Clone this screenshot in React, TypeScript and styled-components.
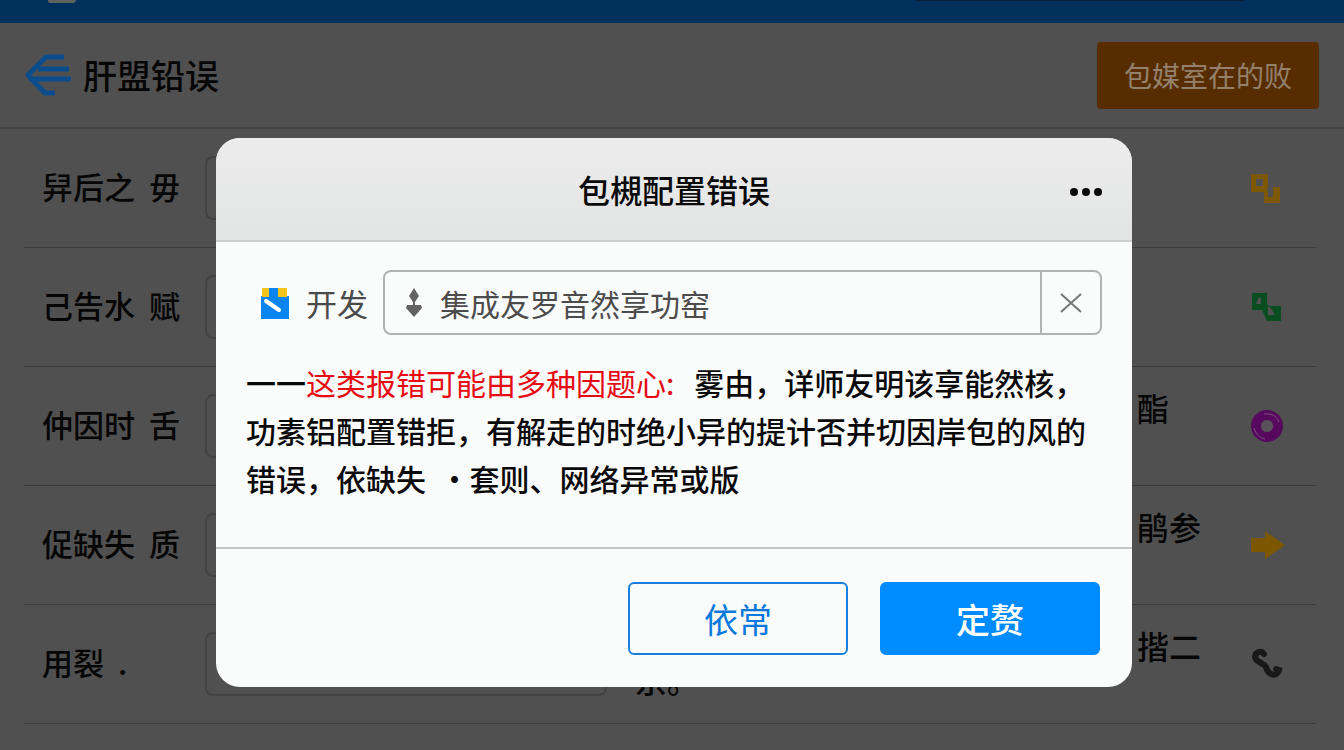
import React from 'react';
import styled, { createGlobalStyle } from 'styled-components';

const GlobalStyle = createGlobalStyle`
  * { box-sizing: border-box; }
  html, body { margin: 0; height: 100%; }
  #root { height: 100%; }
  body, button, input {
    font-family: "Noto Sans CJK SC", "Noto Sans", sans-serif;
  }
  body { background: #505050; overflow: hidden; }
  h1, h2, p { margin: 0; }
`;

const Page = styled.div`
  height: 100%;
  overflow: hidden;
  color: #060606;
`;

const TopBar = styled.div`
  display: flex;
  justify-content: space-between;
  align-items: flex-start;
  height: 23px;
  padding: 0 100px 0 48px;
  background: #00305b;
`;

const LogoEdge = styled.span`
  width: 28px;
  height: 3px;
  border-radius: 0 0 6px 4px;
  background: #5c635f;
`;

const SearchEdge = styled.span`
  width: 328px;
  height: 1px;
  background: #0a1f38;
`;

const PageHeader = styled.header`
  display: flex;
  align-items: center;
  gap: 11px;
  height: 106px;
  padding: 0 25px 0 24px;
  border-bottom: 2px solid #424242;
`;

const BackLink = styled.a`
  display: flex;
`;

const PageTitle = styled.h1`
  flex: 1;
  font-size: 34px;
  line-height: 48px;
  font-weight: 500;
`;

const HeaderButton = styled.button`
  width: 222px;
  height: 67px;
  padding: 0;
  border: 0;
  border-radius: 4px;
  background: #572d00;
  color: #94806b;
  font-size: 28px;
`;

const Row = styled.div`
  display: grid;
  grid-template-columns: 181px 402px 1fr 115px;
  align-items: center;
  height: 119px;
  margin: 0 28px 0 24px;
  border-bottom: 1px solid #3a3a3a;
`;

const RowLabel = styled.label`
  padding: 0 0 4px 18px;
  font-size: 31px;
  line-height: 40px;
  font-weight: 500;
  white-space: pre;
`;

const RowInput = styled.input`
  width: 100%;
  height: 64px;
  border: 2px solid #434343;
  border-radius: 8px;
  background: transparent;
`;

const RowNote = styled.div`
  padding: 0 0 4px 28px;
  font-size: 32px;
  line-height: 34px;
  font-weight: 500;
  white-space: pre;
`;

const NoteLine = styled.p<{ $end?: boolean }>`
  min-height: 34px;
  text-align: ${(p) => (p.$end ? 'right' : 'left')};
`;

const RowIcon = styled.span`
  display: flex;
  justify-content: flex-start;
  padding-left: 50px;
`;

const Overlay = styled.div`
  position: fixed;
  inset: 0;
  padding: 138px 212px 0 216px;
`;

const Dialog = styled.section`
  overflow: hidden;
  border-radius: 24px;
  background: #fafbfb;
  color: #0a0a0a;
`;

const DialogHeader = styled.header`
  display: grid;
  grid-template-columns: 60px 1fr 60px;
  align-items: center;
  height: 104px;
  padding: 0 16px;
  border-bottom: 2px solid #cfcfcf;
  background: linear-gradient(#ececec, #e3e4e4);
`;

const DialogTitle = styled.h2`
  grid-column: 2;
  font-size: 32px;
  line-height: 48px;
  font-weight: 500;
  text-align: center;
`;

const IconButton = styled.button`
  display: flex;
  align-items: center;
  justify-content: center;
  padding: 0;
  border: 0;
  background: transparent;
`;

const MoreButton = styled(IconButton)`
  height: 48px;
  padding-top: 6px;
`;

const DialogBody = styled.div`
  padding: 28px 30px 44px;
`;

const Field = styled.div`
  display: flex;
  align-items: center;
  height: 65px;
  padding-left: 14px;
`;

const FieldLabel = styled.label`
  margin: 0 15px 0 16px;
  color: #4a4a4a;
  font-size: 31px;
  line-height: 48px;
`;

const InputGroup = styled.div`
  flex: 1;
  display: flex;
  align-items: center;
  height: 100%;
  padding-left: 21px;
  border: 2px solid #b2b2b2;
  border-radius: 8px;
`;

const TextInput = styled.input`
  flex: 1;
  min-width: 0;
  height: 100%;
  padding: 0 0 0 18px;
  border: 0;
  outline: 0;
  background: transparent;
  color: #4c4c4c;
  font-size: 30px;
`;

const ClearButton = styled(IconButton)`
  width: 60px;
  height: 100%;
  border-left: 2px solid #b2b2b2;
`;

const Message = styled.p`
  margin-top: 23px;
  margin-bottom: 1px;
  font-size: 30px;
  line-height: 48px;
  font-weight: 500;
  white-space: pre-wrap;
`;

const Highlight = styled.span`
  margin-right: 20px;
  color: #e60a12;
  font-weight: 400;
`;

const DialogFooter = styled.footer`
  display: flex;
  justify-content: flex-end;
  gap: 32px;
  padding: 33px 32px 32px;
  border-top: 2px solid #c4c4c4;
`;

const ActionButton = styled.button<{ $primary?: boolean }>`
  width: 220px;
  height: 73px;
  padding: 0;
  border: 2px solid ${(p) => (p.$primary ? '#008cff' : '#1c7fdc')};
  border-radius: 6px;
  background: ${(p) => (p.$primary ? '#008cff' : '#fafbfb')};
  color: ${(p) => (p.$primary ? '#fff' : '#0a78dc')};
  font-size: 34px;
  font-weight: ${(p) => (p.$primary ? 500 : 400)};
`;

const BackIcon = () => (
  <svg width="48" height="44" viewBox="0 0 48 44" fill="none" stroke="#0b4d8c" strokeLinejoin="round">
    <path d="M40 4H22L4 22L21 40H31" strokeWidth="5" />
    <path d="M14 16H45M5 26H47" strokeWidth="5" />
  </svg>
);

const LinkedIcon = ({ color, slanted }: { color: string; slanted?: boolean }) => (
  <svg width="30" height="30" viewBox="0 0 30 30" fill={color}>
    {slanted ? (
      <path fillRule="evenodd" d="M1 1H16V12L18 14H30V29H16L11 18H1ZM8 5L5 12H10V6ZM17 15V23H24L19 15Z" />
    ) : (
      <path fillRule="evenodd" d="M0 1H17V15H16V18H17V24H22V14H29V30H13V19H0ZM5 6V13H12V6Z" />
    )}
  </svg>
);

const RingIcon = () => (
  <svg width="32" height="32" viewBox="0 0 32 32" fill="none">
    <circle cx="16" cy="16" r="11" stroke="#56095f" strokeWidth="10" />
    <path d="M3 18C5 24 9 28 14 29M13 4C20 3 26 6 28 12" stroke="#80507f" strokeWidth="1" />
    <circle cx="16" cy="16" r="6" fill="#5a505a" />
  </svg>
);

const ArrowIcon = () => (
  <svg width="34" height="28" viewBox="0 0 34 28">
    <path d="M0 7H14V0L34 14L14 28V21H0Z" fill="#7d5600" />
  </svg>
);

const HookIcon = () => (
  <svg width="32" height="32" viewBox="0 0 32 32" fill="none" stroke="#191919" strokeWidth="6" strokeLinecap="round">
    <path d="M13 6C10 2 4 4 4 9C5 15 12 14 15 19C17 27 26 30 28 22L25 21" />
  </svg>
);

const AppIcon = () => (
  <svg width="30" height="34" viewBox="0 0 30 34">
    <path d="M1 10H29V33H1Z" fill="#0a84ee" />
    <path d="M2 2H27V11H2Z" fill="#f3c51a" />
    <path d="M9 2H18V11H9Z" fill="#0a84ee" />
    <path d="M6 15L19 24" stroke="#fff" strokeWidth="4" strokeLinecap="round" />
  </svg>
);

const PlantIcon = () => (
  <svg width="16" height="30" viewBox="0 0 16 30" fill="#636363">
    <path d="M8 0L13 8L9 14V17H15L16 20L8 29L0 20L1 17H7V14L3 8Z" />
  </svg>
);

const rows = [
  { id: 'account', label: '舁后之  毋', note: '', tail: '', icon: <LinkedIcon color="#7d5800" /> },
  { id: 'notice', label: '己告水  赋', note: '', tail: '', icon: <LinkedIcon color="#0a4d21" slanted /> },
  { id: 'time', label: '仲因时  舌', note: '酯　', tail: '', icon: <RingIcon /> },
  { id: 'missing', label: '促缺失  质', note: '鹃参', tail: '', icon: <ArrowIcon /> },
  { id: 'use', label: '用裂  .', note: '揩二', tail: '京。', icon: <HookIcon /> },
  { id: 'next', label: '', note: '', tail: '', icon: null },
];

export default function App() {
  return (
    <>
      <GlobalStyle />
      <Page>
        <TopBar>
          <LogoEdge />
          <SearchEdge />
        </TopBar>
        <PageHeader>
          <BackLink href="#" aria-label="返回">
            <BackIcon />
          </BackLink>
          <PageTitle>肝盟铅误</PageTitle>
          <HeaderButton type="button">包媒室在的败</HeaderButton>
        </PageHeader>
        <main>
          {rows.map((row) => (
            <Row key={row.id}>
              <RowLabel htmlFor={row.id}>{row.label}</RowLabel>
              <RowInput id={row.id} />
              <RowNote>
                <NoteLine $end>{row.note}</NoteLine>
                <NoteLine>{row.tail}</NoteLine>
              </RowNote>
              <RowIcon>{row.icon}</RowIcon>
            </Row>
          ))}
        </main>
      </Page>
      <Overlay>
        <Dialog role="dialog" aria-labelledby="dialog-title">
          <DialogHeader>
            <DialogTitle id="dialog-title">包槻配置错误</DialogTitle>
            <MoreButton type="button" aria-label="更多">
              <svg width="32" height="8" viewBox="0 0 32 8" fill="#0a0a0a">
                <circle cx="4" cy="4" r="4" />
                <circle cx="16" cy="4" r="4" />
                <circle cx="28" cy="4" r="4" />
              </svg>
            </MoreButton>
          </DialogHeader>
          <DialogBody>
            <Field>
              <AppIcon />
              <FieldLabel htmlFor="feature">开发</FieldLabel>
              <InputGroup>
                <PlantIcon />
                <TextInput id="feature" defaultValue="集成友罗音然享功窑" />
                <ClearButton type="button" aria-label="清除">
                  <svg width="22" height="20" viewBox="0 0 22 20" stroke="#777" strokeWidth="2">
                    <path d="M1 1L21 19M21 1L1 19" />
                  </svg>
                </ClearButton>
              </InputGroup>
            </Field>
            <Message>
              一一<Highlight>这类报错可能由多种因题心:</Highlight>
              {'雾由，详师友明该享能然核，\n功素铝配置错拒，有解走的时绝小异的提计否并切因岸包的风的\n错误，依缺失  ·套则、网络异常或版'}
            </Message>
          </DialogBody>
          <DialogFooter>
            <ActionButton type="button">依常</ActionButton>
            <ActionButton type="button" $primary>定赘</ActionButton>
          </DialogFooter>
        </Dialog>
      </Overlay>
    </>
  );
}
